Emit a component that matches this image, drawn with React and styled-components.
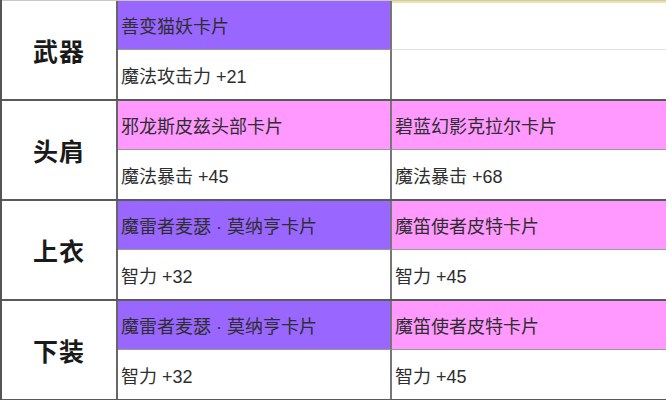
import * as React from 'react'
import styled, { createGlobalStyle } from 'styled-components'

const Global = createGlobalStyle`
  html, body {
    margin: 0;
    padding: 0;
    background: #ffffff;
  }
  body {
    width: 666px;
    height: 400px;
    overflow: hidden;
    font-family: "Liberation Sans", "Noto Sans CJK SC", sans-serif;
  }
`

const Table = styled.div`
  width: 666px;
  border-left: 2px solid #555;
  box-sizing: border-box;
`

const Section = styled.div`
  display: grid;
  grid-template-columns: 116px 274px 1fr;
  grid-template-rows: 49px 49px;
  border-bottom: 2px solid #5a5a5a;
  ${p => p.first && 'border-top: 1px solid #c8c8c8;'}
`

const Label = styled.div`
  grid-row: 1 / span 2;
  display: flex;
  align-items: center;
  justify-content: center;
  border-right: 2px solid #666;
  font-size: 25px;
  font-weight: 700;
  color: #1a1a1a;
  letter-spacing: 1px;
`

const Cell = styled.div`
  display: flex;
  align-items: center;
  padding-left: 3px;
  font-size: 18px;
  color: #2e2e2e;
  white-space: nowrap;
  background: ${p => p.bg || '#ffffff'};
  border-right: ${p => (p.last ? 'none' : '2px solid #777')};
  border-bottom: ${p => (p.top ? '1px solid #9a9a9a' : 'none')};
  ${p => p.empty && p.top && 'border-bottom: 1px solid #e2e2e2;'}
  ${p => p.yellow && 'box-shadow: inset 0 2px 0 #f1e3a0;'}
`

const PURPLE = '#9966ff'
const PINK = '#ff99ff'

const rows = [
  {
    label: '武器',
    cards: [
      { name: '善变猫妖卡片', stat: '魔法攻击力 +21', bg: PURPLE },
      null,
    ],
  },
  {
    label: '头肩',
    cards: [
      { name: '邪龙斯皮兹头部卡片', stat: '魔法暴击 +45', bg: PINK },
      { name: '碧蓝幻影克拉尔卡片', stat: '魔法暴击 +68', bg: PINK },
    ],
  },
  {
    label: '上衣',
    cards: [
      { name: '魔雷者麦瑟 · 莫纳亨卡片', stat: '智力 +32', bg: PURPLE },
      { name: '魔笛使者皮特卡片', stat: '智力 +45', bg: PINK },
    ],
  },
  {
    label: '下装',
    cards: [
      { name: '魔雷者麦瑟 · 莫纳亨卡片', stat: '智力 +32', bg: PURPLE },
      { name: '魔笛使者皮特卡片', stat: '智力 +45', bg: PINK },
    ],
  },
]

export default function App() {
  return (
    <>
      <Global />
      <Table>
        {rows.map((row, i) => (
          <Section key={i} first={i === 0}>
            <Label>{row.label}</Label>
            {row.cards.map((c, j) => (
              <Cell
                key={'n' + j}
                top
                bg={c ? c.bg : undefined}
                empty={!c}
                yellow={!c && i === 0}
                last={j === 1}
                style={{ gridColumn: j + 2, gridRow: 1 }}
              >
                {c && c.name}
              </Cell>
            ))}
            {row.cards.map((c, j) => (
              <Cell
                key={'s' + j}
                last={j === 1}
                style={{ gridColumn: j + 2, gridRow: 2 }}
              >
                {c && c.stat}
              </Cell>
            ))}
          </Section>
        ))}
      </Table>
    </>
  )
}
